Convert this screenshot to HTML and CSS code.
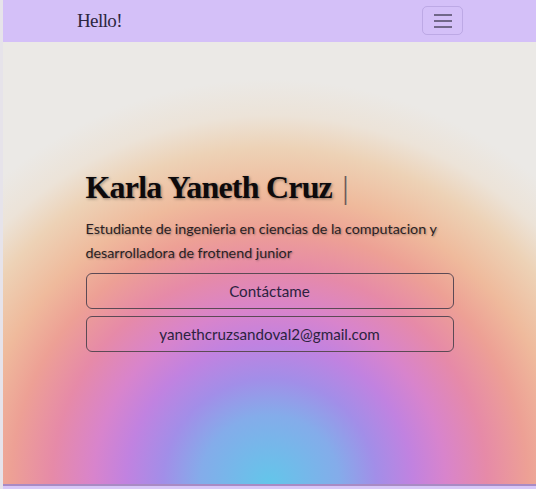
FILE: index.html
```html
<!DOCTYPE html>
<html lang="es">
<head>
<meta charset="utf-8">
<title>Hello!</title>
<link rel="stylesheet" href="styles.css">
</head>
<body>
<div class="page">
  <nav class="navbar">
    <div class="nav-inner">
      <a class="brand" href="#">Hello!</a>
      <button class="toggler" type="button" aria-label="menu">
        <svg width="20" height="16" viewBox="0 0 20 16"><path d="M1 2h18M1 8h18M1 14h18" stroke="#716789" stroke-width="2.2"/></svg>
      </button>
    </div>
  </nav>
  <section class="hero">
    <div class="hero-content">
      <h1 class="title">Karla Yaneth Cruz <span class="cursor">|</span></h1>
      <p class="subtitle">Estudiante de ingenieria en ciencias de la computacion y desarrolladora de frotnend junior</p>
      <a class="btn" href="#">Contáctame</a>
      <a class="btn" href="#">yanethcruzsandoval2@gmail.com</a>
    </div>
  </section>
  <div class="next"></div>
</div>
</body>
</html>
```

FILE: styles.css
```css
html, body {
  margin: 0;
  padding: 0;
  height: 100%;
  overflow: hidden;
}
body {
  background: #e6e3ea;
}
.page {
  margin-left: 3px;
  display: flex;
  flex-direction: column;
  height: 489px;
}
.navbar {
  background: #d4c0f8;
  height: 42px;
  flex: none;
}
.nav-inner {
  display: flex;
  align-items: center;
  justify-content: space-between;
  height: 100%;
  padding: 0 73px 0 74px;
}
.brand {
  font-family: "Liberation Serif", serif;
  font-size: 19px;
  letter-spacing: -0.6px;
  color: #2c2540;
  text-decoration: none;
  padding-bottom: 1px;
}
.toggler {
  width: 41px;
  height: 29px;
  border: 1px solid rgba(120, 100, 170, 0.25);
  border-radius: 5px;
  background: transparent;
  display: flex;
  align-items: center;
  justify-content: center;
  padding: 0;
  margin-bottom: 1px;
}
.hero {
  height: 442px;
  flex: none;
  background: radial-gradient(ellipse 410px 405px at 50% 100%,
    #63c6ea 0%, #84acea 17%, #a28ee8 26%, #c182e0 35%, #d884cc 43%,
    #e68aa8 53%, #eda095 63%, #efba9c 72%, #edd2b6 83%, #ece3d8 91%, #ebe9e6 100%);
  display: flex;
  justify-content: center;
  border-bottom: 2px solid #a98bc4;
}
.hero-content {
  width: 368px;
  padding-top: 123px;
  display: flex;
  flex-direction: column;
}
.title {
  font-family: "Liberation Serif", serif;
  font-weight: 700;
  font-size: 32px;
  letter-spacing: -0.8px;
  margin: 0;
  color: #0d0a0c;
  text-shadow: 1px 1px 3px rgba(0,0,0,0.4);
  line-height: 44px;
}
.cursor {
  color: #6b5a5a;
  font-weight: 300;
  text-shadow: none;
  margin-left: 3px;
}
.subtitle {
  font-family: "Lato", sans-serif;
  font-size: 14.3px;
  line-height: 24px;
  color: #2a1f24;
  margin: 8px 0 8px;
  text-shadow: 1px 1px 2px rgba(0,0,0,0.3);
}
.btn {
  display: block;
  box-sizing: border-box;
  height: 36px;
  line-height: 34px;
  border: 1px solid #5c4a55;
  border-radius: 6px;
  text-align: center;
  font-family: "Lato", sans-serif;
  font-size: 15.2px;
  color: #2c2240;
  text-decoration: none;
  margin-bottom: 7px;
}
.next {
  flex: 1;
  background: #d8c8f8;
}
```
